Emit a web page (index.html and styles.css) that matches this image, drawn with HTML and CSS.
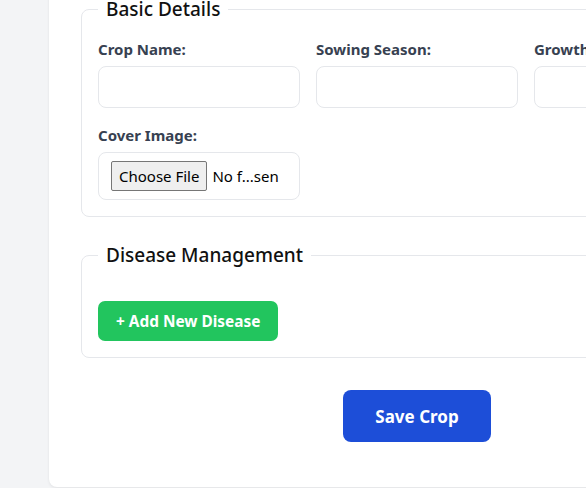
FILE: index.html
```html
<!DOCTYPE html>
<html lang="en">
<head>
<meta charset="utf-8">
<title>Add Crop</title>
<link rel="stylesheet" href="styles.css">
</head>
<body>
<div class="page">
  <div class="card">
    <form class="crop-form">
      <fieldset class="group">
        <legend>Basic Details</legend>
        <div class="grid">
          <div class="field">
            <label class="label">Crop Name:</label>
            <input class="input" type="text">
          </div>
          <div class="field">
            <label class="label">Sowing Season:</label>
            <input class="input" type="text">
          </div>
          <div class="field">
            <label class="label">Growth Duration:</label>
            <input class="input" type="text">
          </div>
          <div class="field">
            <label class="label">Cover Image:</label>
            <div class="file-box">
              <span class="file-btn">Choose File</span>
              <span class="file-name">No f...sen</span>
            </div>
          </div>
        </div>
      </fieldset>
      <fieldset class="group">
        <legend>Disease Management</legend>
        <div class="disease-list"></div>
        <button type="button" class="btn-add">+ Add New Disease</button>
      </fieldset>
      <div class="actions">
        <button type="button" class="btn-save">Save Crop</button>
      </div>
    </form>
  </div>
</div>
</body>
</html>
```
FILE: styles.css
```css
* { box-sizing: border-box; }
html, body { margin: 0; padding: 0; }
body {
  background: #f3f4f6;
  font-family: "Noto Sans", "Open Sans", sans-serif;
  overflow: hidden;
  height: 488px;
}
.page {
  padding-left: 49px;
  width: 900px;
}
.card {
  width: 736px;
  background: #fff;
  border-radius: 0 0 8px 8px;
  box-shadow: 0 1px 3px rgba(0,0,0,0.08);
  padding: 0 32px 45px;
  margin-top: -5px;
}
.group {
  margin: 0 0 24px;
  border: 1px solid #e5e7eb;
  border-radius: 8px;
  padding: 16px;
  min-width: 0;
}
.group legend {
  padding: 0 8px;
  font-size: 19px;
  font-weight: 500;
  line-height: 28px;
  color: #111;
}
.grid {
  display: grid;
  grid-template-columns: repeat(3, minmax(0, 1fr));
  column-gap: 16px;
  row-gap: 17px;
}
.field { display: flex; flex-direction: column; min-width: 0; }
.label {
  font-size: 15px;
  font-weight: 700;
  color: #374151;
  line-height: 21px;
  margin-bottom: 6px;
  white-space: nowrap;
}
.input {
  width: 100%;
  min-width: 0;
  height: 42px;
  border: 1px solid #e5e7eb;
  border-radius: 8px;
  padding: 8px 12px;
  font: inherit;
}
.file-box {
  height: 48px;
  border: 1px solid #e5e7eb;
  border-radius: 8px;
  padding: 0 12px;
  display: flex;
  align-items: center;
  gap: 5px;
  font-size: 15px;
  color: #000;
}
.file-btn {
  background: #efefef;
  border: 1px solid #767676;
  border-radius: 2px;
  height: 30px;
  padding: 0 7px;
  display: flex;
  align-items: center;
}
.disease-list { margin-bottom: 16px; }
.btn-add {
  background: #22c55e;
  color: #fff;
  border: 0;
  border-radius: 7px;
  height: 40px;
  padding: 0 18px;
  font: inherit;
  font-size: 15.4px;
  font-weight: 700;
}
.actions {
  display: flex;
  justify-content: center;
  padding-top: 8px;
}
.btn-save {
  background: #1d4ed8;
  color: #fff;
  border: 0;
  border-radius: 8px;
  width: 148px;
  height: 52px;
  font: inherit;
  font-size: 17px;
  font-weight: 700;
}
```
